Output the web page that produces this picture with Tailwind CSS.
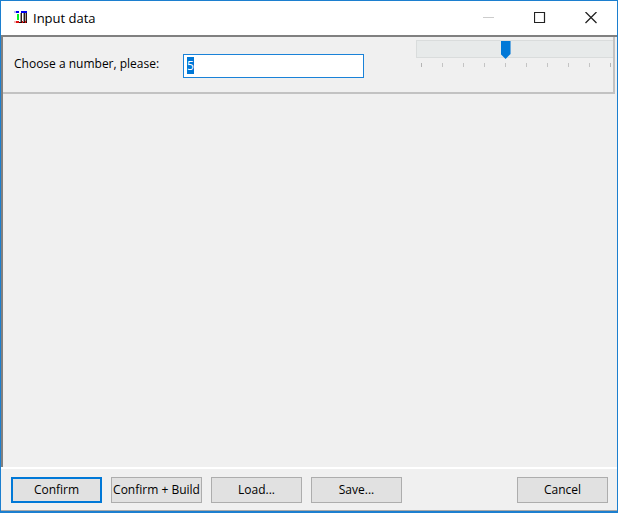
<!DOCTYPE html>
<html lang="en">
<head>
    <meta charset="UTF-8">
    <meta name="viewport" content="width=device-width, initial-scale=1.0">
    <script src="https://cdn.jsdelivr.net/npm/@tailwindcss/browser@4"></script>
    <title>Input data</title>
</head>
<body>
    <main class="w-full h-screen flex flex-col border border-b-2 border-[#1c7fcf] bg-[#f0f0f0] font-['Open_Sans',sans-serif] text-xs text-black">

        <header class="h-[34px] shrink-0 flex items-center bg-white pl-3">
            <svg class="w-4 h-4 mr-1" viewBox="0 0 16 16" shape-rendering="crispEdges" aria-hidden="true">
                <path fill="#f4b8b8" d="M1 11h2v2H1z"/>
                <path fill="#b8b8f4" d="M1 1h2v2H1z"/>
                <path fill="#0000f0" d="M3 1h3v2H3zM8 1h6v2H8z"/>
                <path fill="#00f020" d="M4 4h2v6H4z"/>
                <path fill="#999" d="M7 3h1v9H7zM10 3h1v9h-1zM12 3h1v9h-1z"/>
                <path fill="#301818" d="M8 3h1v9H8zM11 3h1v9h-1zM13 3h1v9h-1z"/>
                <path fill="#e01010" d="M3 11h3v2H3zM9 11h1v2H9zM12 11h1v2h-1z"/>
                <path fill="#300000" d="M6 12h3v1H6zM10 12h2v1h-2zM13 12h1v1h-1z"/>
            </svg>
            <h1 class="text-[13px] leading-4">Input data</h1>
            <div class="ml-auto flex h-full pr-px">
                <button type="button" disabled aria-label="Minimize" class="w-[51px] flex items-center justify-center">
                    <svg class="w-3 h-3" viewBox="0 0 12 12"><path d="M0 5.5h11" stroke="#ccc"/></svg>
                </button>
                <button type="button" aria-label="Maximize" class="w-[51px] flex items-center justify-center">
                    <svg class="w-3 h-3" viewBox="0 0 12 12"><path d="M.5.5h10v10H.5z" fill="none" stroke="#222" stroke-width="1.2"/></svg>
                </button>
                <button type="button" aria-label="Close" class="w-[51px] flex items-center justify-center">
                    <svg class="w-3 h-3" viewBox="0 0 12 12"><path d="M.5 0l11 11M11.5 0l-11 11" stroke="#222" stroke-width="1.3"/></svg>
                </button>
            </div>
        </header>

        <form class="grow min-h-0 flex flex-col" onsubmit="event.preventDefault()">
            <section class="grow border-t-2 border-l-2 border-t-[#808080] border-l-[#808080]">
                <div class="h-[57px] mr-0.5 flex overflow-hidden border-r-2 border-b-2 border-[#c2c2c2]">
                    <label for="number" class="w-[180px] shrink-0 pl-[11px] pt-[19px] leading-4">Choose a number, please:</label>
                    <input type="text" id="number" name="number" value="5" class="w-[181px] h-6 shrink-0 mt-[17px] px-[3px] pb-0.5 border border-[#1a82d8] bg-white leading-4 outline-none caret-transparent selection:bg-[#0078d7] selection:text-white">
                    <div class="w-[200px] shrink-0 ml-[52px] pt-[3px]">
                        <input type="range" id="slider" aria-label="Number" min="1" max="10" value="5" class="block w-full h-[18px] appearance-none border border-[#d9dcdc] bg-[#e7eaea] outline-none [&::-webkit-slider-thumb]:appearance-none [&::-webkit-slider-thumb]:w-[10px] [&::-webkit-slider-thumb]:h-[18px] [&::-webkit-slider-thumb]:mt-0.5 [&::-webkit-slider-thumb]:bg-[#0078d7] [&::-webkit-slider-thumb]:[clip-path:polygon(0_0,100%_0,100%_72%,50%_100%,0_72%)]">
                        <div class="flex justify-between px-[5px] pt-[5px]">
                            <span class="w-px h-1 bg-[#b4b4b4]"></span>
                            <span class="w-px h-1 bg-[#c4c4c4]"></span>
                            <span class="w-px h-1 bg-[#c4c4c4]"></span>
                            <span class="w-px h-1 bg-[#c4c4c4]"></span>
                            <span class="w-px h-1 bg-[#c4c4c4]"></span>
                            <span class="w-px h-1 bg-[#c4c4c4]"></span>
                            <span class="w-px h-1 bg-[#c4c4c4]"></span>
                            <span class="w-px h-1 bg-[#c4c4c4]"></span>
                            <span class="w-px h-1 bg-[#c4c4c4]"></span>
                            <span class="w-px h-1 bg-[#b4b4b4]"></span>
                        </div>
                    </div>
                </div>
            </section>

            <footer class="shrink-0 flex gap-[9px] border-t-2 border-white border-b-[#a8a8a8] border-b pl-[10px] pr-[9px] pt-2 pb-[7px]">
                <button type="submit" class="w-[91px] h-[26px] border-2 border-[#0078d7] bg-[#e1e1e1]">Confirm</button>
                <button type="button" class="w-[91px] h-[26px] border border-[#adadad] bg-[#e1e1e1] whitespace-nowrap">Confirm + Build</button>
                <button type="button" class="w-[91px] h-[26px] border border-[#adadad] bg-[#e1e1e1]">Load...</button>
                <button type="button" class="w-[91px] h-[26px] border border-[#adadad] bg-[#e1e1e1]">Save...</button>
                <button type="button" class="w-[91px] h-[26px] ml-auto border border-[#adadad] bg-[#e1e1e1]">Cancel</button>
            </footer>
        </form>
    </main>
</body>

<script>
    let number = document.getElementById("number")
    let slider = document.getElementById("slider")

    slider.addEventListener("input", () => {
        number.value = slider.value
    })
    number.addEventListener("input", () => {
        slider.value = number.value
    })

    number.focus()
    number.select()
</script>
</html>
